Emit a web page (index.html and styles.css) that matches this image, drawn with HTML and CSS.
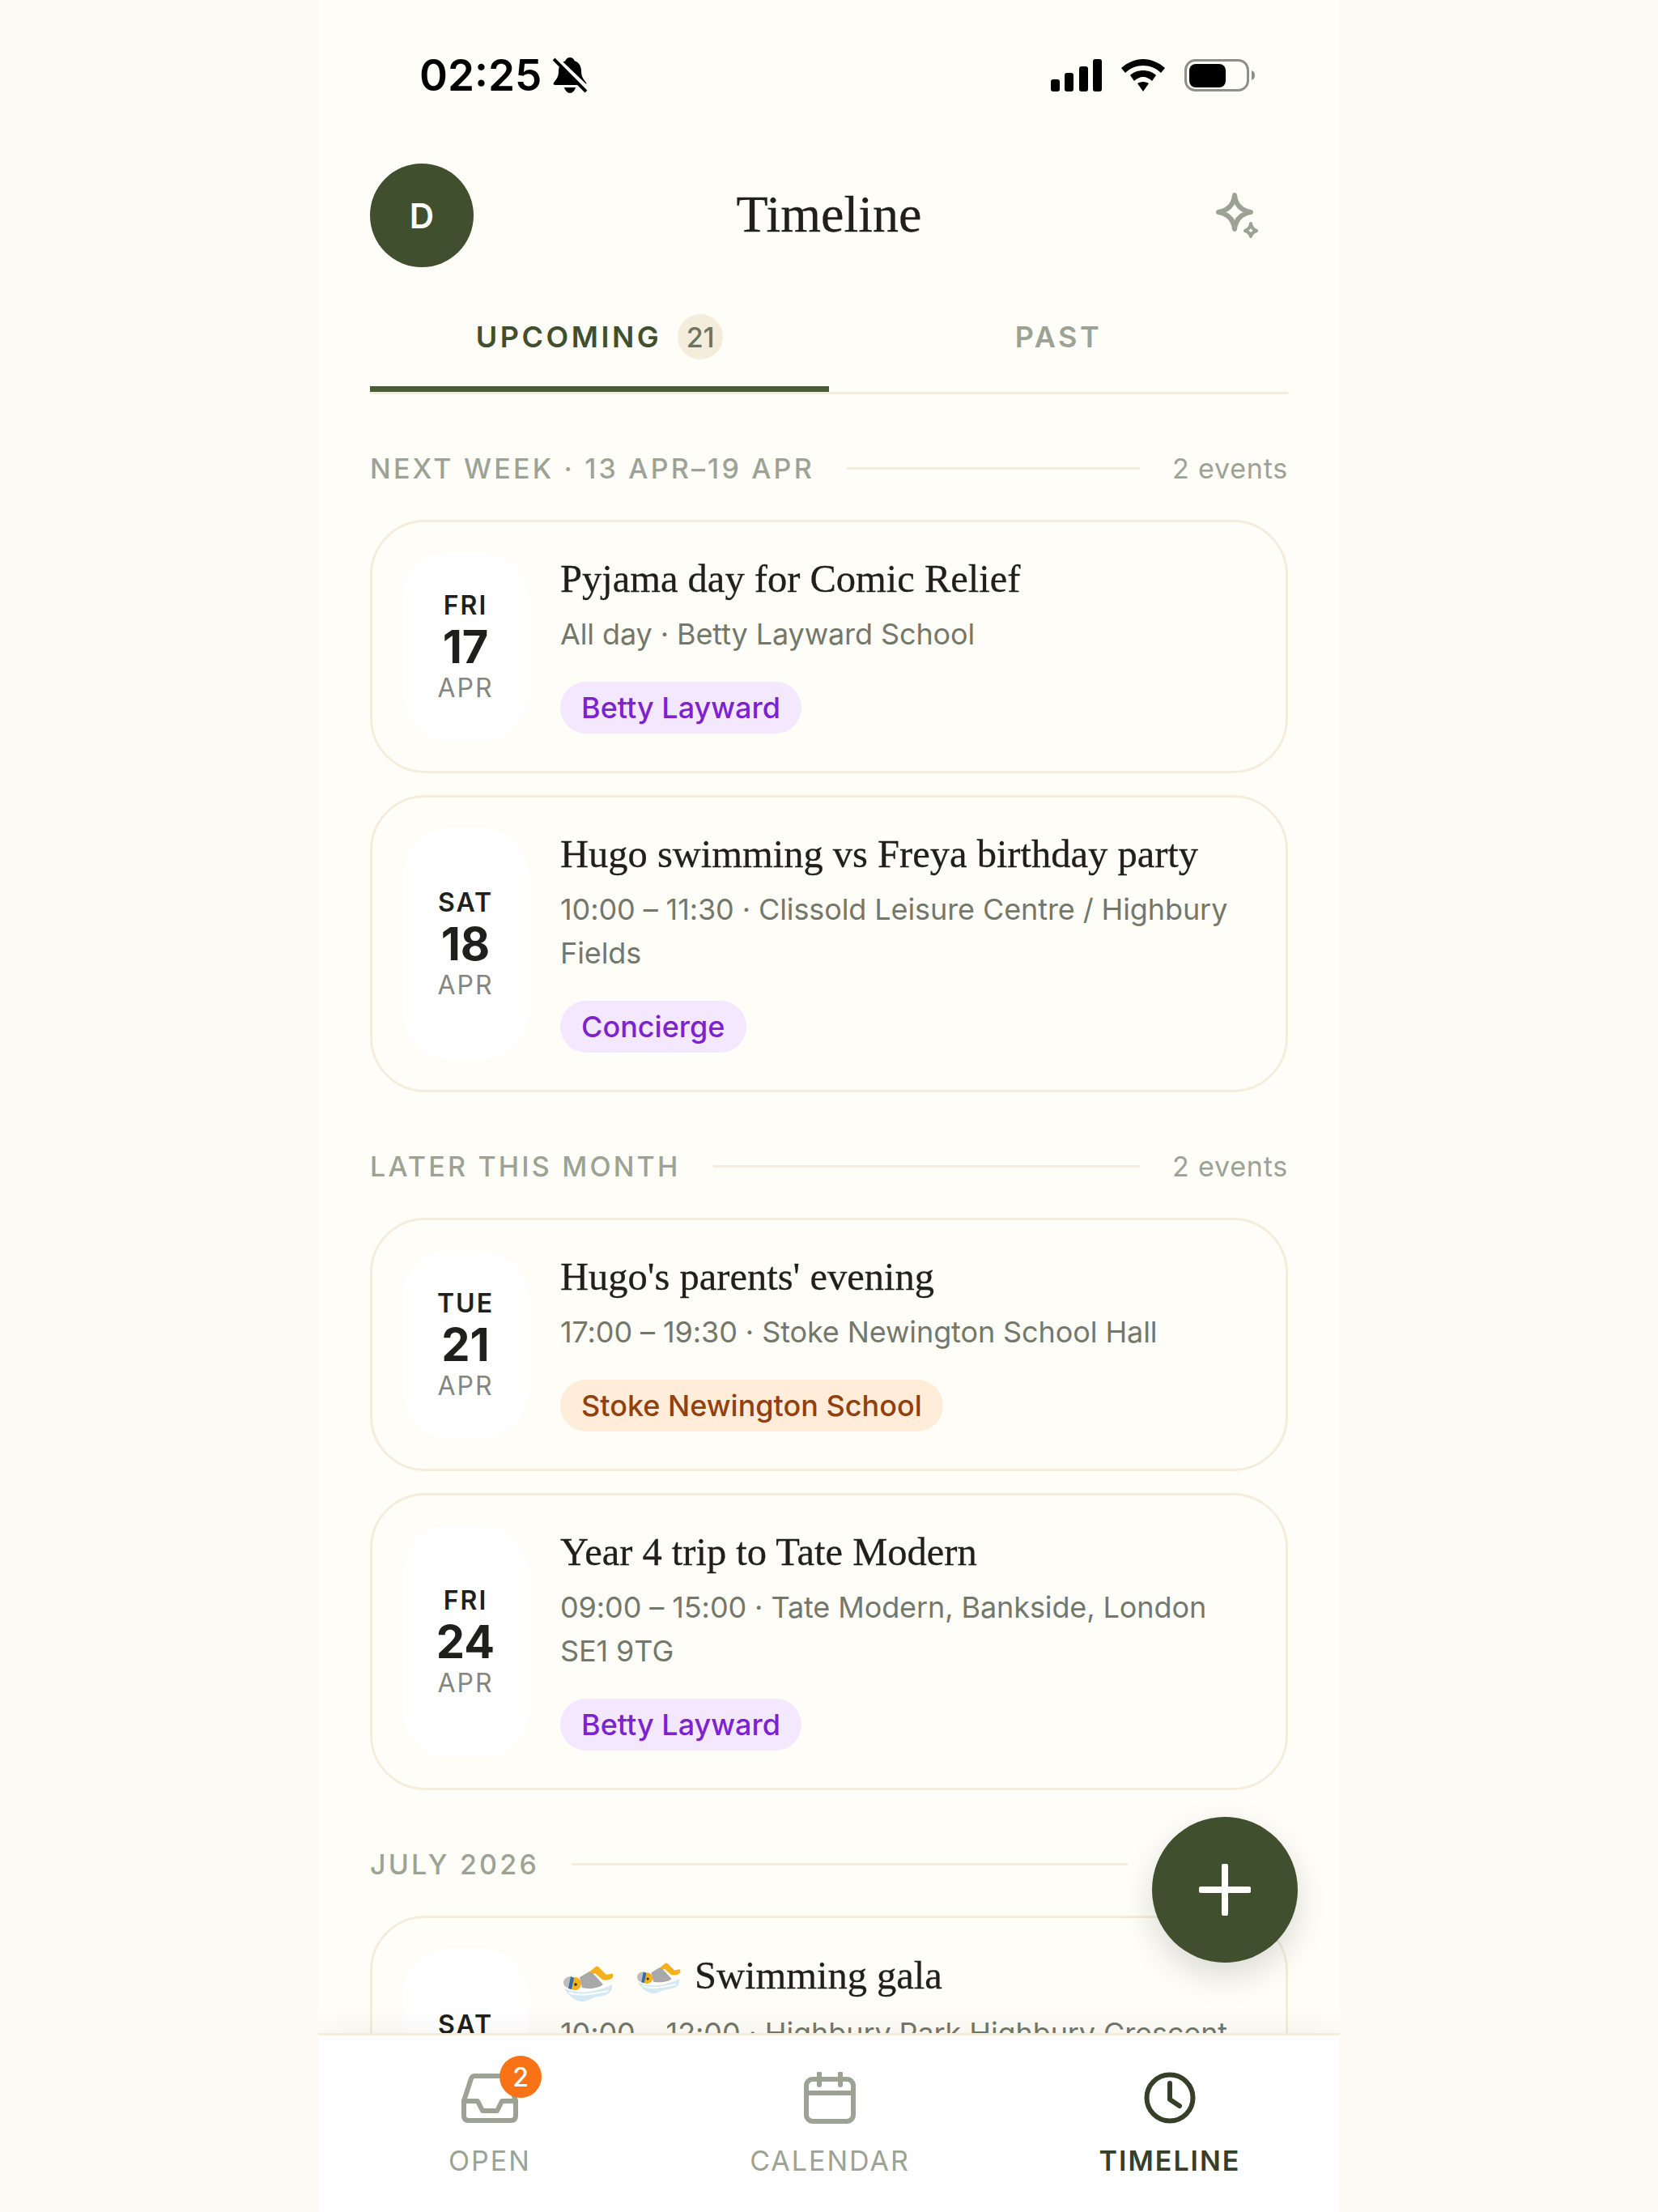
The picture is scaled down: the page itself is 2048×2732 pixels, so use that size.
FILE: index.html
```html
<!DOCTYPE html>
<html lang="en">
<head>
    <meta charset="UTF-8">
    <meta name="viewport" content="width=device-width, initial-scale=1.0">
    <title>Timeline</title>
    <link rel="stylesheet" href="styles.css">
</head>
<body>

<div class="screen">
    <!-- Status bar -->
    <div class="status-bar">
        <div class="status-left">
            <span class="time">02:25</span>
            <svg class="bell" width="42" height="46" viewBox="0 0 42 46">
                <path d="M21 1c3 0 5 2 5.500 4 6 2 8.500 7 8.500 13 0 6 2 9 6 14 1 2 0 3-2 3H3c-2 0-3-1-2-3 4-5 6-8 6-14 0-6 3-11 8.500-13C16 3 18 1 21 1z"/>
                <path d="M14 38h14c-1 4-4 7-7 7s-6-3-7-7z"/>
                <path class="bell-gap" d="M1 -1L44 40"/>
                <path class="bell-line" d="M1 3L41 43"/>
            </svg>
        </div>
        <div class="status-right">
            <svg width="63" height="40" viewBox="0 0 63 40">
                <rect x="0" y="25" width="11" height="15" rx="3"/>
                <rect x="17" y="17" width="11" height="23" rx="3"/>
                <rect x="35" y="9" width="11" height="31" rx="3"/>
                <rect x="52" y="0" width="11" height="40" rx="3"/>
            </svg>
            <svg width="54" height="40" viewBox="0 0 54 40">
                <path d="M27 0c10 0 19 4 27 11l-5 6c-6-6-14-9-22-9S11 11 5 17l-5-6C8 4 17 0 27 0z"/>
                <path d="M27 14c6 0 12 2 16 6l-5 7c-3-3-7-5-11-5s-8 2-11 5l-5-7c4-4 10-6 16-6z"/>
                <path d="M27 28c3 0 5 1 7 2l-7 10-7-10c2-1 4-2 7-2z"/>
            </svg>
            <svg width="88" height="40" viewBox="0 0 88 40">
                <rect class="batt-frame" x="1.500" y="1.500" width="77" height="37" rx="12"/>
                <rect x="6" y="6" width="45" height="29" rx="8"/>
                <path class="batt-nub" d="M83 14c3 1 4 3 4 6s-1 5-4 6z"/>
            </svg>
        </div>
    </div>

    <!-- Header -->
    <div class="header">
        <div class="avatar">D</div>
        <h1>Timeline</h1>
        <svg class="sparkle" width="54" height="56" viewBox="0 0 54 56">
            <path d="M23 3Q25 21 43 24Q25 27 23 45Q21 27 3 24Q21 21 23 3z"/>
            <path class="sparkle-small" d="M43 38Q44 45 50 47Q44 49 43 54Q42 49 36 47Q42 45 43 38z"/>
        </svg>
    </div>

    <!-- Tabs -->
    <div class="tabs">
        <div class="tab active">UPCOMING <span class="tab-count">21</span></div>
        <div class="tab">PAST</div>
    </div>

    <!-- Event list -->
    <div class="list">
        <div class="section-head">
            <span class="section-name">NEXT WEEK · 13 APR–19 APR</span>
            <span class="section-line"></span>
            <span class="section-count">2 events</span>
        </div>

        <div class="event-card">
            <div class="date-box">
                <span class="date-day">FRI</span>
                <span class="date-num">17</span>
                <span class="date-month">APR</span>
            </div>
            <div class="event-body">
                <h2>Pyjama day for Comic Relief</h2>
                <p class="event-meta">All day · Betty Layward School</p>
                <span class="pill pill-purple">Betty Layward</span>
            </div>
        </div>

        <div class="event-card">
            <div class="date-box">
                <span class="date-day">SAT</span>
                <span class="date-num">18</span>
                <span class="date-month">APR</span>
            </div>
            <div class="event-body">
                <h2>Hugo swimming vs Freya birthday party</h2>
                <p class="event-meta">10:00 – 11:30 · Clissold Leisure Centre / Highbury Fields</p>
                <span class="pill pill-purple">Concierge</span>
            </div>
        </div>

        <div class="section-head">
            <span class="section-name">LATER THIS MONTH</span>
            <span class="section-line"></span>
            <span class="section-count">2 events</span>
        </div>

        <div class="event-card">
            <div class="date-box">
                <span class="date-day">TUE</span>
                <span class="date-num">21</span>
                <span class="date-month">APR</span>
            </div>
            <div class="event-body">
                <h2>Hugo's parents' evening</h2>
                <p class="event-meta">17:00 – 19:30 · Stoke Newington School Hall</p>
                <span class="pill pill-orange">Stoke Newington School</span>
            </div>
        </div>

        <div class="event-card">
            <div class="date-box">
                <span class="date-day">FRI</span>
                <span class="date-num">24</span>
                <span class="date-month">APR</span>
            </div>
            <div class="event-body">
                <h2>Year 4 trip to Tate Modern</h2>
                <p class="event-meta">09:00 – 15:00 · Tate Modern, Bankside, London SE1 9TG</p>
                <span class="pill pill-purple">Betty Layward</span>
            </div>
        </div>

        <div class="section-head">
            <span class="section-name">JULY 2026</span>
            <span class="section-line"></span>
            <span class="section-count">12 events</span>
        </div>

        <div class="event-card">
            <div class="date-box">
                <span class="date-day">SAT</span>
                <span class="date-num">4</span>
                <span class="date-month">JUL</span>
            </div>
            <div class="event-body">
                <h2 class="title-swim">
                    <svg class="swimmer-big" width="64" height="46" viewBox="0 0 64 46">
                        <use href="#swimmer"/>
                    </svg>
                    <svg class="swimmer-small" width="56" height="40" viewBox="0 0 64 46">
                        <use href="#swimmer"/>
                    </svg>
                    Swimming gala
                </h2>
                <p class="event-meta">10:00 – 12:00 · Highbury Park Highbury Crescent London</p>
                <span class="pill pill-purple">Concierge</span>
            </div>
        </div>
    </div>

    <!-- Add button -->
    <div class="fab">
        <svg width="64" height="64" viewBox="0 0 64 64">
            <path d="M32 3V61M3 32H61"/>
        </svg>
    </div>

    <!-- Bottom nav -->
    <div class="bottom-nav">
        <div class="nav-item">
            <div class="nav-icon">
                <svg width="72" height="64" viewBox="0 0 72 64">
                    <path d="M4 36L13 8c1-2 2-3 4-3h38c2 0 3 1 4 3l9 28v18c0 4-2 6-6 6H10c-4 0-6-2-6-6z"/>
                    <path d="M4 36h17l6 12h18l6-12h17"/>
                </svg>
                <span class="nav-badge">2</span>
            </div>
            <span class="nav-label">OPEN</span>
        </div>
        <div class="nav-item">
            <div class="nav-icon">
                <svg width="64" height="64" viewBox="0 0 64 64">
                    <rect x="3" y="9" width="58" height="52" rx="8"/>
                    <path d="M3 26H61M19 2V16M45 2V16"/>
                </svg>
            </div>
            <span class="nav-label">CALENDAR</span>
        </div>
        <div class="nav-item active">
            <div class="nav-icon">
                <svg width="64" height="64" viewBox="0 0 64 64">
                    <circle cx="32" cy="32" r="28.500"/>
                    <path d="M32 14V34L44 42"/>
                </svg>
            </div>
            <span class="nav-label">TIMELINE</span>
        </div>
    </div>
</div>

<!-- Swimmer drawing used twice in the last card -->
<svg class="defs" width="0" height="0">
    <defs>
        <g id="swimmer">
            <path d="M2 28C14 33 30 34 42 30C50 28 56 26 61 23C62 34 54 37 44 38C36 39 30 45 22 44C14 42 6 36 2 28z" fill="#d4e9f3"/>
            <path d="M8 33C20 38 34 35 56 31" stroke="#fff" stroke-width="2" fill="none"/>
            <path d="M31 9L41 1C43 0 44 1 46 3L54 11L61 9.500C63 10 63 14 60 16C56 18 52 18 49 17L40 9L35 12z" fill="#f6b01c"/>
            <path d="M21 14L33 7L40 12L50 23C44 28 32 29 24 27z" fill="#a8a8a8"/>
            <circle cx="15" cy="22" r="8" fill="#f6b01c"/>
            <path d="M1 20C2 14 8 12 13 14L9 28C4 27 1 25 1 20z" fill="#bdbdbd"/>
            <path d="M10 13L14 15L11 29L7 28z" fill="#2f6db0"/>
            <circle cx="16" cy="23" r="1.800" fill="#3a2a10"/>
        </g>
    </defs>
</svg>

</body>
</html>
```

FILE: styles.css
```css
body {
    font-family: Inter, "Noto Sans", sans-serif;
    background-color: #fcfaf2;
    margin: 0;
    padding: 0;
    display: flex;
    justify-content: center;
}

.screen {
    position: relative;
    width: 1262px;
    height: 2732px;
    background-color: #fffdf8;
    display: flex;
    flex-direction: column;
    overflow: hidden;
}

.defs {
    position: absolute;
}

/* Status bar */
.status-bar {
    height: 186px;
    flex: none;
    display: flex;
    justify-content: space-between;
    align-items: center;
    padding: 0 104px 0 125px;
}

.status-left {
    display: flex;
    align-items: center;
    gap: 14px;
}

.status-right {
    display: flex;
    align-items: center;
    gap: 24px;
}

.time {
    font-size: 53px;
    font-weight: 600;
    color: #000;
    line-height: 60px;
}

.bell path {
    fill: #000;
}

.bell .bell-gap {
    fill: none;
    stroke: #fffdf8;
    stroke-width: 5;
}

.bell .bell-line {
    fill: none;
    stroke: #000;
    stroke-width: 4;
}

.batt-frame {
    fill: none;
    stroke: #8f8f8a;
    stroke-width: 3;
}

.batt-nub {
    fill: #8f8f8a;
}

/* Header */
.header {
    flex: none;
    height: 128px;
    margin-top: 16px;
    padding: 0 64px;
    display: flex;
    justify-content: space-between;
    align-items: center;
    position: relative;
}

.header h1 {
    position: absolute;
    left: 0;
    right: 0;
    margin: -2px 0 0;
    text-align: center;
    font-family: "Liberation Serif", serif;
    font-size: 64px;
    font-weight: 400;
    color: #1f1f1b;
    -webkit-text-stroke: 0.3px #1f1f1b;
}

.avatar {
    width: 128px;
    height: 128px;
    border-radius: 50%;
    background-color: #404f2e;
    color: white;
    font-size: 42px;
    font-weight: 600;
    display: flex;
    align-items: center;
    justify-content: center;
}

.sparkle {
    margin-right: 35px;
}

.sparkle path {
    fill: none;
    stroke: #9ca394;
    stroke-width: 6;
    stroke-linejoin: round;
}

.sparkle .sparkle-small {
    stroke-width: 4;
}

/* Tabs */
.tabs {
    flex: none;
    margin: 18px 64px 0;
    display: flex;
    border-bottom: 3px solid #f5eddc;
}

.tab {
    flex: 1;
    height: 136px;
    box-sizing: border-box;
    padding-top: 7px;
    border-bottom: 7px solid transparent;
    display: flex;
    align-items: center;
    justify-content: center;
    gap: 20px;
    font-size: 36px;
    font-weight: 600;
    letter-spacing: 3.500px;
    color: #9ca394;
}

.tab.active {
    color: #404f2e;
    border-bottom-color: #4a5c33;
}

.tab-count {
    width: 56px;
    height: 56px;
    border-radius: 50%;
    background-color: #f5eddc;
    color: #6c7460;
    font-size: 34px;
    font-weight: 500;
    letter-spacing: 0;
    display: flex;
    align-items: center;
    justify-content: center;
}

/* Event list */
.list {
    flex: 1;
    min-height: 0;
    overflow: hidden;
    padding: 0 64px;
}

.section-head {
    height: 44px;
    margin: 69px 0 42px;
    display: flex;
    align-items: center;
    gap: 40px;
    font-size: 34px;
    color: #9ca394;
}

.section-name {
    font-weight: 500;
    letter-spacing: 3.200px;
}

.section-count {
    letter-spacing: 0.800px;
}

.section-line {
    flex: 1;
    height: 3px;
    background-color: #f5eddc;
}

.event-card {
    display: flex;
    gap: 40px;
    padding: 38px;
    margin-bottom: 27px;
    border: 3px solid #f5eddc;
    border-radius: 68px;
    background-color: #fffdf8;
}

.date-box {
    flex: none;
    width: 154px;
    border-radius: 56px;
    background-color: white;
    display: flex;
    flex-direction: column;
    align-items: center;
    justify-content: center;
    color: #1f1f1b;
}

.date-day {
    font-size: 32px;
    font-weight: 600;
    letter-spacing: 2px;
    line-height: 40px;
}

.date-num {
    font-size: 56px;
    font-weight: 700;
    line-height: 62px;
}

.date-month {
    font-size: 32px;
    letter-spacing: 2px;
    color: #85867d;
    line-height: 40px;
}

.event-body {
    flex: 1;
    min-width: 0;
    padding-bottom: 8px;
}

.event-body h2 {
    margin: 1px 0 10px;
    font-family: "Liberation Serif", serif;
    font-size: 48.500px;
    font-weight: 400;
    line-height: 62px;
    color: #1f1f1b;
    -webkit-text-stroke: 0.3px #1f1f1b;
}

.event-body .title-swim {
    display: flex;
    align-items: center;
    min-height: 69px;
    margin-top: -2px;
}

.swimmer-big {
    align-self: flex-end;
    margin: 0 27px 0 3px;
}

.swimmer-small {
    margin: 8px 16px 0 0;
}

.event-meta {
    margin: 0 0 32px;
    font-size: 36px;
    line-height: 54px;
    letter-spacing: -0.100px;
    color: #74786a;
}

.pill {
    display: block;
    width: fit-content;
    height: 64px;
    line-height: 64px;
    padding: 0 26px;
    border-radius: 32px;
    font-size: 36px;
    font-weight: 500;
}

.pill-purple {
    background-color: #f3e8ff;
    color: #7e22ce;
}

.pill-orange {
    background-color: #ffedd9;
    color: #92400e;
}

/* Add button */
.fab {
    position: absolute;
    left: 1030px;
    top: 2244px;
    width: 180px;
    height: 180px;
    border-radius: 50%;
    background-color: #404f2e;
    box-shadow: 0 16px 40px rgba(0, 0, 0, 0.14);
    display: flex;
    align-items: center;
    justify-content: center;
}

.fab path {
    fill: none;
    stroke: white;
    stroke-width: 8;
    stroke-linecap: round;
}

/* Bottom nav */
.bottom-nav {
    flex: none;
    position: relative;
    height: 221px;
    box-sizing: border-box;
    border-top: 3px solid #f5eddc;
    background-color: white;
    box-shadow: 0 -10px 30px rgba(0, 0, 0, 0.04);
    display: flex;
    padding: 45px 0 0 2px;
}

.nav-item {
    flex: 1;
    display: flex;
    flex-direction: column;
    align-items: center;
    color: #9ca394;
}

.nav-icon {
    position: relative;
    height: 64px;
}

.nav-icon svg {
    display: block;
}

.nav-icon svg * {
    fill: none;
    stroke: #9ca394;
    stroke-width: 6;
    stroke-linejoin: round;
    stroke-linecap: round;
}

.nav-item.active {
    color: #363f28;
}

.nav-item.active svg * {
    stroke: #363f28;
}

.nav-badge {
    position: absolute;
    left: 48px;
    top: -20px;
    width: 52px;
    height: 52px;
    border-radius: 50%;
    background-color: #f97316;
    color: white;
    font-size: 32px;
    font-weight: 500;
    display: flex;
    align-items: center;
    justify-content: center;
}

.nav-label {
    margin-top: 24px;
    font-size: 34px;
    line-height: 44px;
    letter-spacing: 2px;
}

.nav-item.active .nav-label {
    font-weight: 600;
}
```
